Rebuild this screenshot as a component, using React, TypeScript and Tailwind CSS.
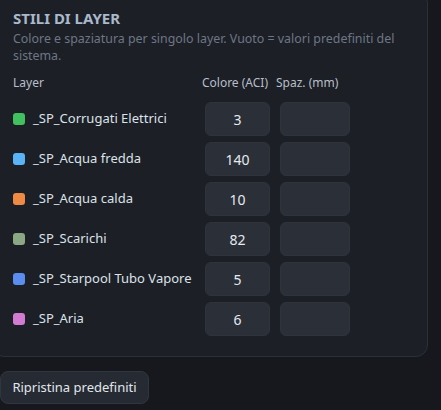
const layers = [
  { name: '_SP_Corrugati Elettrici', color: '#41c05f', aci: '3' },
  { name: '_SP_Acqua fredda', color: '#5ab2f7', aci: '140' },
  { name: '_SP_Acqua calda', color: '#ef8a45', aci: '10' },
  { name: '_SP_Scarichi', color: '#8aa883', aci: '82' },
  { name: '_SP_Starpool Tubo Vapore', color: '#5b8cef', aci: '5' },
  { name: '_SP_Aria', color: '#d27bd0', aci: '6' },
];

export default function App() {
  return (
    <div
      className="h-[410px] w-[441px] overflow-hidden bg-[#16181d]"
      style={{ fontFamily: '"Noto Sans", "Open Sans", sans-serif' }}
    >
      {/* Layer styles card */}
      <div className="-ml-[8px] -mt-[9px] w-[436px] rounded-xl border border-[#2b3039] bg-[#1c1f26] pb-[20px] pl-[20px] pt-[15px]">
        <h2 className="text-[15px] font-bold leading-[22px] text-[#a9b9cc]">STILI DI LAYER</h2>
        <p className="mt-[1px] w-[390px] text-[12.4px] leading-[17px] text-[#6e7684]">
          Colore e spaziatura per singolo layer. Vuoto = valori predefiniti del sistema.
        </p>

        <div className="mt-[10px] flex h-[18px] items-center text-[12px] text-[#b8bec8]">
          <span className="w-[183px]">Layer</span>
          <span className="w-[78px] text-center">Colore (ACI)</span>
          <span className="w-[70px] pl-[2px]">Spaz. (mm)</span>
        </div>

        <div className="mt-[10px] flex flex-col gap-[6px]">
          {layers.map((l) => (
            <div key={l.name} className="flex h-[34px] items-center">
              <span className="mr-[8px] h-[12px] w-[12px] rounded-[3px]" style={{ backgroundColor: l.color }} />
              <span className="w-[172px] text-[13px] text-[#dde2e9]">{l.name}</span>
              <input
                readOnly
                value={l.aci}
                className="h-[34px] w-[65px] rounded-md border border-[#2e333c] bg-[#2a2f38] text-center text-[14px] text-[#e6e9ee] outline-none"
              />
              <input
                readOnly
                value=""
                className="ml-[10px] h-[34px] w-[70px] rounded-md border border-[#2e333c] bg-[#2a2f38] text-center text-[14px] text-[#e6e9ee] outline-none"
              />
            </div>
          ))}
        </div>
      </div>

      <button className="mt-[14px] h-[33px] w-[149px] rounded-lg border border-[#30363f] bg-[#262b33] text-[13px] text-[#e1e6ec]">
        Ripristina predefiniti
      </button>
    </div>
  );
}
